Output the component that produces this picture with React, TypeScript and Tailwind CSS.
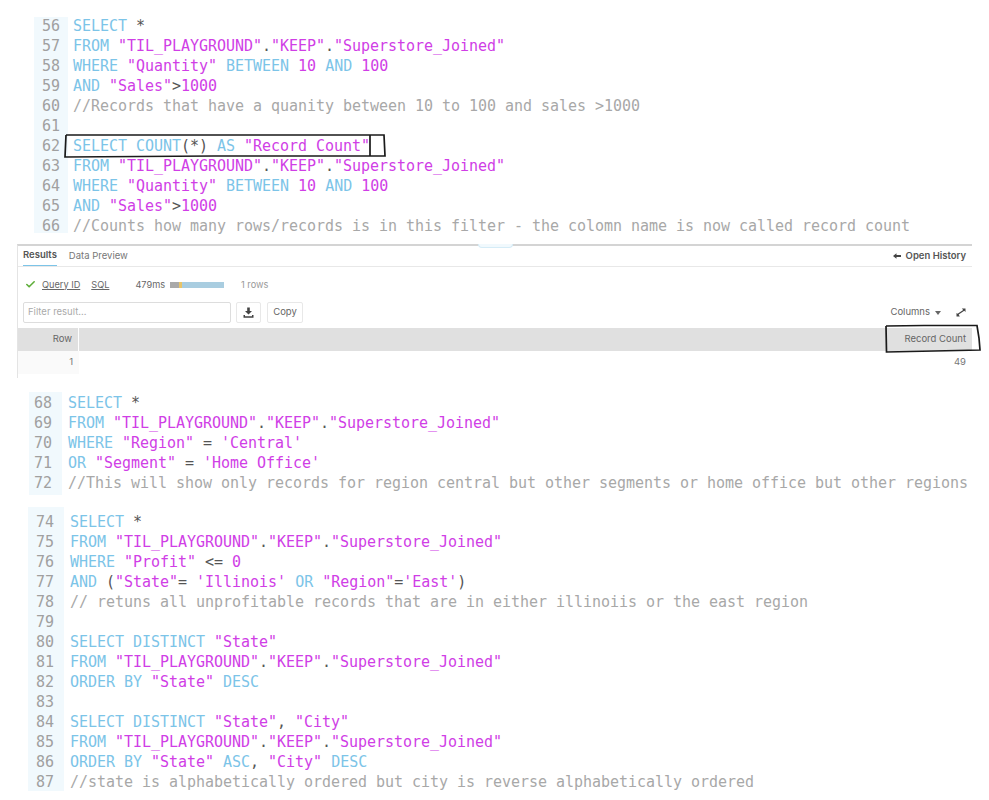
import React from "react";
import { Check } from "lucide-react";

const K = ({ children }: { children: React.ReactNode }) => <span className="text-[#7cc4e8]">{children}</span>;
const S = ({ children }: { children: React.ReactNode }) => <span className="text-[#d03ee6]">{children}</span>;
const O = ({ children }: { children: React.ReactNode }) => <span className="text-[#555]">{children}</span>;
const C = ({ children }: { children: React.ReactNode }) => <span className="text-[#a8a8a8]">{children}</span>;

const FromLine = () => (
  <>
    <K>FROM</K> <S>"TIL_PLAYGROUND"</S>
    <O>.</O>
    <S>"KEEP"</S>
    <O>.</O>
    <S>"Superstore_Joined"</S>
  </>
);

type Line = [number, React.ReactNode];

function CodeBlock({ lines, gutter, code, className }: { lines: Line[]; gutter: string; code: string; className: string }) {
  return (
    <div className={`flex font-['DejaVu_Sans_Mono',monospace] text-[15px] leading-[18px] tracking-[-0.03px] whitespace-pre ${className}`}>
      <div className={`${gutter} shrink-0 bg-[#f1f9fd] pr-[10px] text-right text-[#a0a0a0]`}>
        {lines.map(([n]) => (
          <div key={n} className="h-[20px]">{n}</div>
        ))}
      </div>
      <div className={code}>
        {lines.map(([n, text]) => (
          <div key={n} className="h-[20px]">{text}</div>
        ))}
      </div>
    </div>
  );
}

function SketchBox({ className, viewBox, d }: { className: string; viewBox: string; d: string }) {
  return (
    <svg className={`absolute ${className}`} viewBox={viewBox} fill="none">
      <path d={d} stroke="#1a1a1a" strokeWidth="1.7" />
    </svg>
  );
}

function ResultsPanel() {
  return (
    <div className="relative ml-[17px] mt-[11px] h-[134px] w-[955px] border-t-2 border-l border-t-[#d4d4d4] border-l-[#e4e4e4] font-['Inter',sans-serif] text-[9.5px] text-[#666]">
      <div className="absolute left-[460px] top-[-2px] h-[4px] w-[35px] rounded-b-sm border border-t-0 border-[#d5ecf7] bg-[#f1f9fd]" />
      <div className="flex h-[21px] items-center justify-between border-b border-[#e8e8e8] pl-[5px] pr-[6px]">
        <div className="flex h-full gap-[12px]">
          <div className="flex h-full items-center border-b border-[#7cc4e8] font-semibold text-[#555]">Results</div>
          <div className="flex h-full items-center text-[#777]">Data Preview</div>
        </div>
        <div className="flex items-center gap-[5px] font-semibold text-[#555]">
          <svg width="8" height="6" viewBox="0 0 8 6">
            <path d="M0 3 L3.5 0.3 V2 H8 V4 H3.5 V5.7 Z" fill="#444" />
          </svg>
          <span>Open History</span>
        </div>
      </div>
      <div className="flex h-[35px] items-center pl-[7px] text-[9.2px]">
        <Check size={11} strokeWidth={3.5} className="text-[#5fae3a]" />
        <span className="ml-[6px] underline">Query ID</span>
        <span className="ml-[11px] underline">SQL</span>
        <span className="ml-[26px]">479ms</span>
        <div className="ml-[5px] flex h-[6px] w-[54px]">
          <div className="w-[9px] bg-[#a9a9a9]" />
          <div className="w-[3px] bg-[#e8c468]" />
          <div className="flex-1 bg-[#a9cde0]" />
        </div>
        <span className="ml-[17px] text-[#999]">1 rows</span>
      </div>
      <div className="flex h-[21px] items-center pl-[5px] pr-[6px]">
        <div className="flex h-[21px] w-[208px] items-center rounded-[2px] border border-[#ddd] pl-[4px] text-[#aaa]">Filter result...</div>
        <div className="ml-[5px] flex h-[21px] w-[25px] items-center justify-center rounded-[2px] border border-[#e8e8e8]">
          <svg width="11" height="11" viewBox="0 0 11 11">
            <path d="M4.2 0.5 H6.8 V4 H9 L5.5 7.6 L2 4 H4.2 Z M0.5 8 H2 V9.3 H9 V8 H10.5 V10.8 H0.5 Z" fill="#444" />
          </svg>
        </div>
        <div className="ml-[6px] flex h-[21px] w-[36px] items-center justify-center rounded-[2px] border border-[#e8e8e8]">Copy</div>
        <div className="ml-auto flex items-center text-[#666]">
          <span>Columns</span>
          <svg className="ml-[5px]" width="6" height="4" viewBox="0 0 6 4">
            <path d="M0 0 H6 L3 4 Z" fill="#666" />
          </svg>
          <svg className="ml-[15px]" width="10" height="9" viewBox="0 0 10 9">
            <path d="M5.8 0.5 H9.5 V4 L8.3 2.8 L2.7 6.4 L3.8 8.5 H0.5 V5 L1.6 5.8 L7.2 2 Z" fill="#444" />
          </svg>
        </div>
      </div>
      <div className="mt-[5px] flex h-[23px] bg-[#e0e0e0]">
        <div className="flex w-[61px] items-center justify-end border-r border-white pr-[6px]">Row</div>
        <div className="flex flex-1 items-center justify-end pr-[6px]">Record Count</div>
      </div>
      <div className="flex h-[23px] text-[#777]">
        <div className="flex w-[61px] items-center justify-end bg-[#fafafa] pr-[6px]">1</div>
        <div className="flex flex-1 items-center justify-end pr-[6px]">49</div>
      </div>
      <SketchBox
        className="right-[-10px] top-[78px] h-[30px] w-[98px]"
        viewBox="0 0 98 30"
        d="M2 2 L40 1.5 L93 1.5 L95 14 L96 26 L50 27 L2.5 28 L2 2"
      />
    </div>
  );
}

export default function App() {
  const block1: Line[] = [
    [56, <><K>SELECT</K> <O>*</O></>],
    [57, <FromLine />],
    [58, <><K>WHERE</K> <S>"Quantity"</S> <K>BETWEEN</K> <S>10</S> <K>AND</K> <S>100</S></>],
    [59, <><K>AND</K> <S>"Sales"</S><O>&gt;</O><S>1000</S></>],
    [60, <C>//Records that have a quanity between 10 to 100 and sales &gt;1000</C>],
    [61, ""],
    [62, <><K>SELECT</K> <K>COUNT</K><O>(*)</O> <K>AS</K> <S>"Record Count"</S></>],
    [63, <FromLine />],
    [64, <><K>WHERE</K> <S>"Quantity"</S> <K>BETWEEN</K> <S>10</S> <K>AND</K> <S>100</S></>],
    [65, <><K>AND</K> <S>"Sales"</S><O>&gt;</O><S>1000</S></>],
    [66, <C>//Counts how many rows/records is in this filter - the colomn name is now called record count</C>],
  ];
  const block2: Line[] = [
    [68, <><K>SELECT</K> <O>*</O></>],
    [69, <FromLine />],
    [70, <><K>WHERE</K> <S>"Region"</S> <O>=</O> <S>'Central'</S></>],
    [71, <><K>OR</K> <S>"Segment"</S> <O>=</O> <S>'Home Office'</S></>],
    [72, <C>//This will show only records for region central but other segments or home office but other regions</C>],
  ];
  const block3: Line[] = [
    [74, <><K>SELECT</K> <O>*</O></>],
    [75, <FromLine />],
    [76, <><K>WHERE</K> <S>"Profit"</S> <O>&lt;=</O> <S>0</S></>],
    [77, <><K>AND</K> <O>(</O><S>"State"</S><O>=</O> <S>'Illinois'</S> <K>OR</K> <S>"Region"</S><O>=</O><S>'East'</S><O>)</O></>],
    [78, <C>// retuns all unprofitable records that are in either illinoiis or the east region</C>],
    [79, ""],
    [80, <><K>SELECT DISTINCT</K> <S>"State"</S></>],
    [81, <FromLine />],
    [82, <><K>ORDER BY</K> <S>"State"</S> <K>DESC</K></>],
    [83, ""],
    [84, <><K>SELECT DISTINCT</K> <S>"State"</S><O>,</O> <S>"City"</S></>],
    [85, <FromLine />],
    [86, <><K>ORDER BY</K> <S>"State"</S> <K>ASC</K><O>,</O> <S>"City"</S> <K>DESC</K></>],
    [87, <C>//state is alphabetically ordered but city is reverse alphabetically ordered</C>],
  ];

  return (
    <div className="min-h-[800px] w-[989px] overflow-hidden bg-white">
      <div className="relative pt-[17px]">
        <CodeBlock
          lines={block1}
          gutter="w-[34px] pl-[8px] [&>div:last-child]:h-[16px]"
          code="pl-[5px] [&>div:last-child]:h-[16px]"
          className="ml-[34px]"
        />
        <SketchBox
          className="left-[64px] top-[133px] h-[26px] w-[322px]"
          viewBox="0 0 322 26"
          d="M2 2 L200 2 L320 2 L321 23 L150 23 L1 24 L2 2 M306 2 L306 23"
        />
      </div>
      <ResultsPanel />
      <CodeBlock lines={block2} gutter="w-[33px] pt-[2px] pb-[1px]" code="pl-[6px] pt-[2px]" className="ml-[29px] mt-[14px]" />
      <CodeBlock
        lines={block3}
        gutter="w-[36px] pt-[6px] [&>div:last-child]:h-[18px]"
        code="pl-[6px] pt-[6px] [&>div:last-child]:h-[18px]"
        className="ml-[28px] mt-[12px]"
      />
    </div>
  );
}
